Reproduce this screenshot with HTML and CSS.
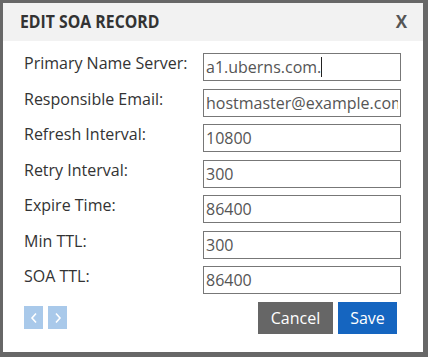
FILE: index.html
```html
<!DOCTYPE html>
<html lang="en">
<head>
    <title>Edit SOA Record</title>
    <meta charset="UTF-8">
    <meta name="viewport" content="width=device-width, initial-scale=1.0">
    <link rel="stylesheet" href="styles.css">
</head>
<body>
    <div class="modal">
        <div class="modal-header">
            <h1 class="modal-title">Edit SOA Record</h1>
            <span class="modal-close">X</span>
        </div>

        <div class="modal-body">
            <div class="form-row">
                <label for="primaryNs">Primary Name Server:</label>
                <div class="input-wrap">
                    <input type="text" id="primaryNs" value="a1.uberns.com.">
                    <span class="caret"></span>
                </div>
            </div>
            <div class="form-row">
                <label for="respEmail">Responsible Email:</label>
                <input type="text" id="respEmail" value="hostmaster@example.com">
            </div>
            <div class="form-row">
                <label for="refresh">Refresh Interval:</label>
                <input type="text" id="refresh" value="10800">
            </div>
            <div class="form-row">
                <label for="retry">Retry Interval:</label>
                <input type="text" id="retry" value="300">
            </div>
            <div class="form-row">
                <label for="expire">Expire Time:</label>
                <input type="text" id="expire" value="86400">
            </div>
            <div class="form-row">
                <label for="minTtl">Min TTL:</label>
                <input type="text" id="minTtl" value="300">
            </div>
            <div class="form-row">
                <label for="soaTtl">SOA TTL:</label>
                <input type="text" id="soaTtl" value="86400">
            </div>

            <div class="modal-footer">
                <div class="pager">
                    <button class="pager-button">
                        <svg width="8" height="12" viewBox="0 0 8 12"><path d="M6 1.5 L2 6 L6 10.5" fill="none" stroke="white" stroke-width="1.6"/></svg>
                    </button>
                    <button class="pager-button">
                        <svg width="8" height="12" viewBox="0 0 8 12"><path d="M2 1.5 L6 6 L2 10.5" fill="none" stroke="white" stroke-width="1.6"/></svg>
                    </button>
                </div>
                <div class="actions">
                    <button class="btn cancel-button">Cancel</button>
                    <button class="btn save-button">Save</button>
                </div>
            </div>
        </div>
    </div>
</body>
</html>
```

FILE: styles.css
```css
* {
    margin: 0;
    padding: 0;
    box-sizing: border-box;
    font-family: "Open Sans", "Liberation Sans", Arial, sans-serif;
}

body {
    width: 428px;
    height: 357px;
    background: #676767;
    padding: 3px 5px 5px 3px;
    overflow: hidden;
}

.modal {
    width: 420px;
    height: 349px;
    background: white;
}

.modal-header {
    height: 37.5px;
    background: #f2f2f2;
    display: flex;
    align-items: center;
    justify-content: space-between;
    padding: 0 16px 0 17px;
}

.modal-title {
    display: inline-block;
    font-size: 17px;
    font-weight: bold;
    text-transform: uppercase;
    color: #333;
    transform: scaleX(0.93);
    transform-origin: left center;
    white-space: nowrap;
}

.modal-close {
    font-size: 17px;
    font-weight: bold;
    color: #555;
    cursor: pointer;
}

.modal-body {
    padding: 12.5px 22px 0 21px;
}

.form-row {
    display: flex;
    align-items: flex-start;
    height: 35.5px;
}

.form-row label {
    width: 179px;
    font-size: 16px;
    color: #333;
    line-height: 22px;
    margin-top: -1px;
}

.form-row input {
    width: 198px;
    height: 28px;
    border: 1px solid #777;
    padding: 0 2px;
    font-size: 16px;
    color: #555;
    outline: none;
}

.input-wrap {
    position: relative;
}

.caret {
    position: absolute;
    left: 118px;
    top: 4px;
    width: 1px;
    height: 20px;
    background: #222;
}

.modal-footer {
    display: flex;
    align-items: center;
    justify-content: space-between;
    padding-right: 4px;
}

.pager {
    display: flex;
    gap: 5px;
}

.pager-button {
    width: 19px;
    height: 23px;
    background: #a9c9ea;
    border: none;
    display: flex;
    align-items: center;
    justify-content: center;
    cursor: pointer;
}

.actions {
    display: flex;
    gap: 5px;
}

.btn {
    height: 32px;
    border: none;
    font-size: 16px;
    color: white;
    cursor: pointer;
}

.cancel-button {
    width: 75px;
    background: #666;
}

.save-button {
    width: 59px;
    background: #1565c0;
}
```
